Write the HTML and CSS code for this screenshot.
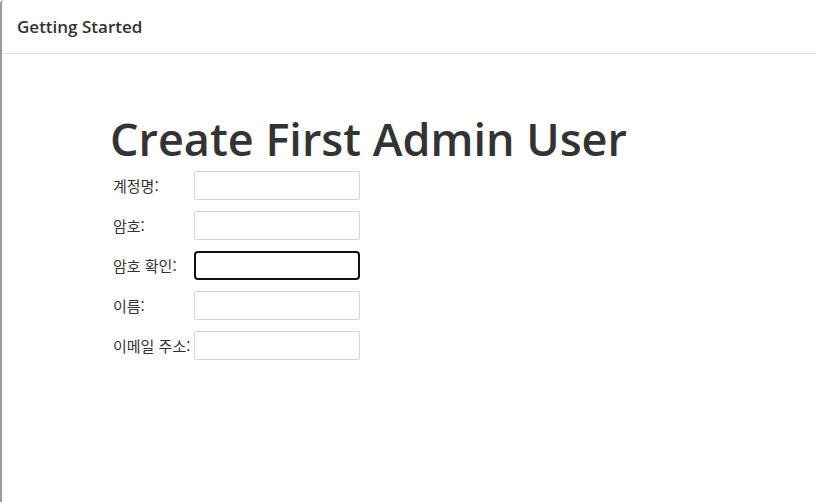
FILE: index.html
```html
<!DOCTYPE html>
<html lang="ko">
<head>
<meta charset="utf-8">
<title>Getting Started</title>
<link rel="stylesheet" href="styles.css">
</head>
<body>
<div class="frame">
  <header class="header">Getting Started</header>
  <main class="content">
    <h1 class="title">Create First Admin User</h1>
    <form class="form">
      <label class="label" for="u">계정명:</label>
      <input class="field" id="u" type="text">
      <label class="label" for="p">암호:</label>
      <input class="field" id="p" type="password">
      <label class="label" for="p2">암호 확인:</label>
      <input class="field focused" id="p2" type="password">
      <label class="label" for="n">이름:</label>
      <input class="field" id="n" type="text">
      <label class="label" for="e">이메일 주소:</label>
      <input class="field" id="e" type="text">
    </form>
  </main>
</div>
</body>
</html>
```

FILE: styles.css
```css
html, body {
  margin: 0;
  padding: 0;
  height: 100%;
  background: #fff;
}
body {
  font-family: "Open Sans", "Noto Sans CJK KR", sans-serif;
  color: #333;
}
.frame {
  box-sizing: border-box;
  height: 100%;
  border-left: 2px solid #9a9a9a;
  border-top-left-radius: 4px;
}
.header {
  box-sizing: border-box;
  height: 54px;
  padding: 15px 0 0 15px;
  font-size: 17px;
  font-weight: 600;
  color: #333;
  border-bottom: 1px solid #e5e5e5;
}
.content {
  padding: 55px 0 0 108px;
}
.title {
  margin: 0;
  font-size: 45px;
  font-weight: 600;
  line-height: 60px;
  color: #333;
}
.form {
  display: grid;
  grid-template-columns: 84px 166px;
  row-gap: 11px;
  align-items: center;
  margin-top: 2px;
}
.label {
  font-family: "Noto Sans CJK KR", sans-serif;
  font-size: 15px;
  color: #333;
  padding-left: 3px;
  white-space: nowrap;
}
.field {
  box-sizing: border-box;
  width: 166px;
  height: 29px;
  margin: 0;
  border: 1px solid #d6d6d6;
  border-radius: 2px;
  background: #fff;
  outline: none;
}
.field.focused {
  border: 2px solid #111;
  border-radius: 4px;
}
```
